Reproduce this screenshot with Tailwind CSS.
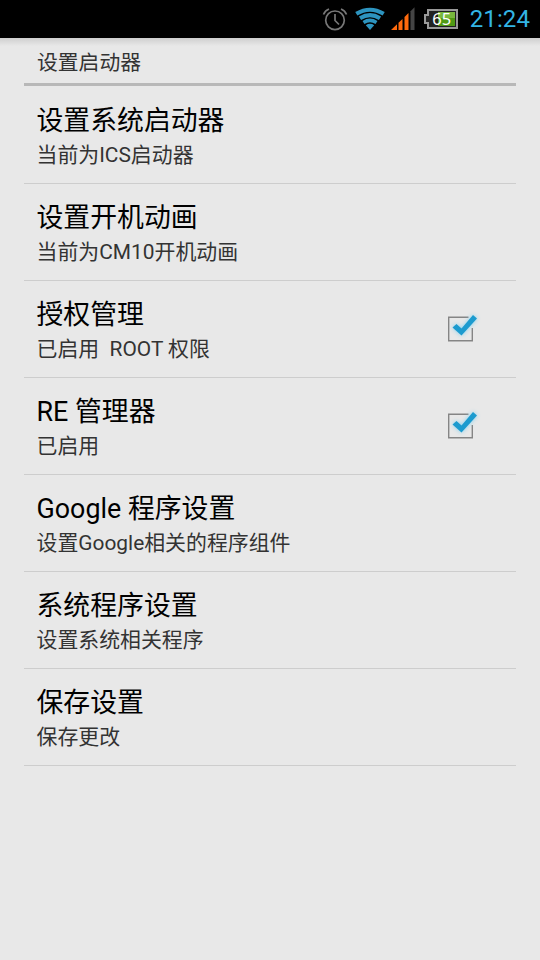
<!DOCTYPE html>
<html lang="zh-CN">
<head>
    <meta charset="UTF-8">
    <meta name="viewport" content="width=device-width, initial-scale=1.0">
    <title>设置启动器</title>
    <script src="https://cdn.jsdelivr.net/npm/@tailwindcss/browser@4"></script>
</head>
<body class="h-[960px] overflow-hidden bg-[#e8e8e8] font-[Roboto,'Noto_Sans_CJK_SC',sans-serif] text-black">
    <!-- Status bar -->
    <header class="flex h-[38px] items-center justify-end bg-black pr-[10px]">
        <svg class="mr-[7px] h-[38px] w-[26px]" viewBox="0 0 26 38" fill="none" stroke="#777" stroke-width="1.7">
            <circle cx="13" cy="20.300" r="9.300"/>
            <path d="M13 14v6.500l4 4M1.500 14.500q1.500-4 5.500-5.500M24.500 14.500q-1.500-4-5.500-5.500"/>
        </svg>
        <svg class="mr-[6px] h-[38px] w-[30px]" viewBox="0 0 30 38" fill="none" stroke="#2d94bf" stroke-width="4">
            <path d="M1.300 13.800Q15 5.500 28.700 13.800M5 18.300Q15 12 25 18.300"/>
            <path d="M8.500 22.500Q15 18.300 21.500 22.500" stroke-width="3.500"/>
            <path d="M10.800 25.200Q15 22.300 19.200 25.200L15 30z" fill="#2d94bf" stroke="none"/>
        </svg>
        <svg class="mr-[9px] h-[38px] w-[24px]" viewBox="0 0 24 38" fill="#ff6a0d">
            <path d="M0 30l6-5.700V30zM7.500 22.700l4-3.800V30h-4zM13.500 17l4-3.900V30h-4z"/>
            <path d="M19.500 11.200l4-3.900V30h-4z" fill="#444"/>
        </svg>
        <div class="relative mr-[12px] h-[20px] w-[34px]">
            <svg class="h-[20px] w-[34px]" viewBox="0 0 34 20">
                <path d="M4 1h29v18H4v-5H1V6h3z" fill="#222" stroke="#999" stroke-width="2"/>
                <path d="M14 3h17v14H14z" fill="#4f9a13"/>
                <path d="M14 3h17v6H14z" fill="#78b83c"/>
            </svg>
            <span class="absolute inset-0 pl-[2px] text-center font-['Noto_Sans'] text-[16.500px] leading-[20px] text-white">65</span>
        </div>
        <span class="pt-px text-[24px] leading-[37px] tracking-[0.1px] text-[#33b5e5]">21:24</span>
    </header>
    <div class="h-[8px] bg-linear-to-b from-[#cfcfcf] to-[#e8e8e8]"></div>

    <!-- Preference list -->
    <main class="mx-6">
        <h1 class="mb-px h-[40px] border-b-3 border-[#b8b8b8] pl-[13px] text-[20.800px] leading-[35px] text-[#333]">设置启动器</h1>
        <ul>
            <li class="flex h-[97px] items-center justify-between border-b border-[#cdcdcd] pl-[12.500px]">
                <div class="pt-1">
                    <h2 class="text-[26.850px] leading-[36px]">设置系统启动器</h2>
                    <p class="text-[20.900px] leading-[32px] text-[#333]">当前为ICS启动器</p>
                </div>
            </li>
            <li class="flex h-[97px] items-center justify-between border-b border-[#cdcdcd] pl-[12.500px]">
                <div class="pt-1">
                    <h2 class="text-[26.850px] leading-[36px]">设置开机动画</h2>
                    <p class="text-[20.900px] leading-[32px] text-[#333]">当前为CM10开机动画</p>
                </div>
            </li>
            <li class="flex h-[97px] items-center justify-between border-b border-[#cdcdcd] pl-[12.500px]">
                <div class="pt-1">
                    <h2 class="text-[26.850px] leading-[36px]">授权管理</h2>
                    <p class="whitespace-pre text-[20.900px] leading-[32px] text-[#333]">已启用  ROOT 权限</p>
                </div>
                <svg class="mr-[32.500px] h-[40px] w-[40px]" viewBox="0 0 40 40">
                    <path d="M24.500 8.200H4.700v23.600h23.600V19" fill="none" stroke="#858585" stroke-width="1.400"/>
                    <path d="M8.500 18.500l4-3.500 5 4.500L29 6l4 3.500-15.500 17z" fill="#1c9bcf" class="drop-shadow-[0_0_2px_#7fd0f0]"/>
                </svg>
            </li>
            <li class="flex h-[97px] items-center justify-between border-b border-[#cdcdcd] pl-[12.500px]">
                <div class="pt-1">
                    <h2 class="text-[26.850px] leading-[36px]">RE 管理器</h2>
                    <p class="text-[20.900px] leading-[32px] text-[#333]">已启用</p>
                </div>
                <svg class="mr-[32.500px] h-[40px] w-[40px]" viewBox="0 0 40 40">
                    <path d="M24.500 8.200H4.700v23.600h23.600V19" fill="none" stroke="#858585" stroke-width="1.400"/>
                    <path d="M8.500 18.500l4-3.500 5 4.500L29 6l4 3.500-15.500 17z" fill="#1c9bcf" class="drop-shadow-[0_0_2px_#7fd0f0]"/>
                </svg>
            </li>
            <li class="flex h-[97px] items-center justify-between border-b border-[#cdcdcd] pl-[12.500px]">
                <div class="pt-1">
                    <h2 class="text-[26.850px] leading-[36px]">Google 程序设置</h2>
                    <p class="text-[20.900px] leading-[32px] text-[#333]">设置Google相关的程序组件</p>
                </div>
            </li>
            <li class="flex h-[97px] items-center justify-between border-b border-[#cdcdcd] pl-[12.500px]">
                <div class="pt-1">
                    <h2 class="text-[26.850px] leading-[36px]">系统程序设置</h2>
                    <p class="text-[20.900px] leading-[32px] text-[#333]">设置系统相关程序</p>
                </div>
            </li>
            <li class="flex h-[97px] items-center justify-between border-b border-[#cdcdcd] pl-[12.500px]">
                <div class="pt-1">
                    <h2 class="text-[26.850px] leading-[36px]">保存设置</h2>
                    <p class="text-[20.900px] leading-[32px] text-[#333]">保存更改</p>
                </div>
            </li>
        </ul>
    </main>
</body>
</html>
